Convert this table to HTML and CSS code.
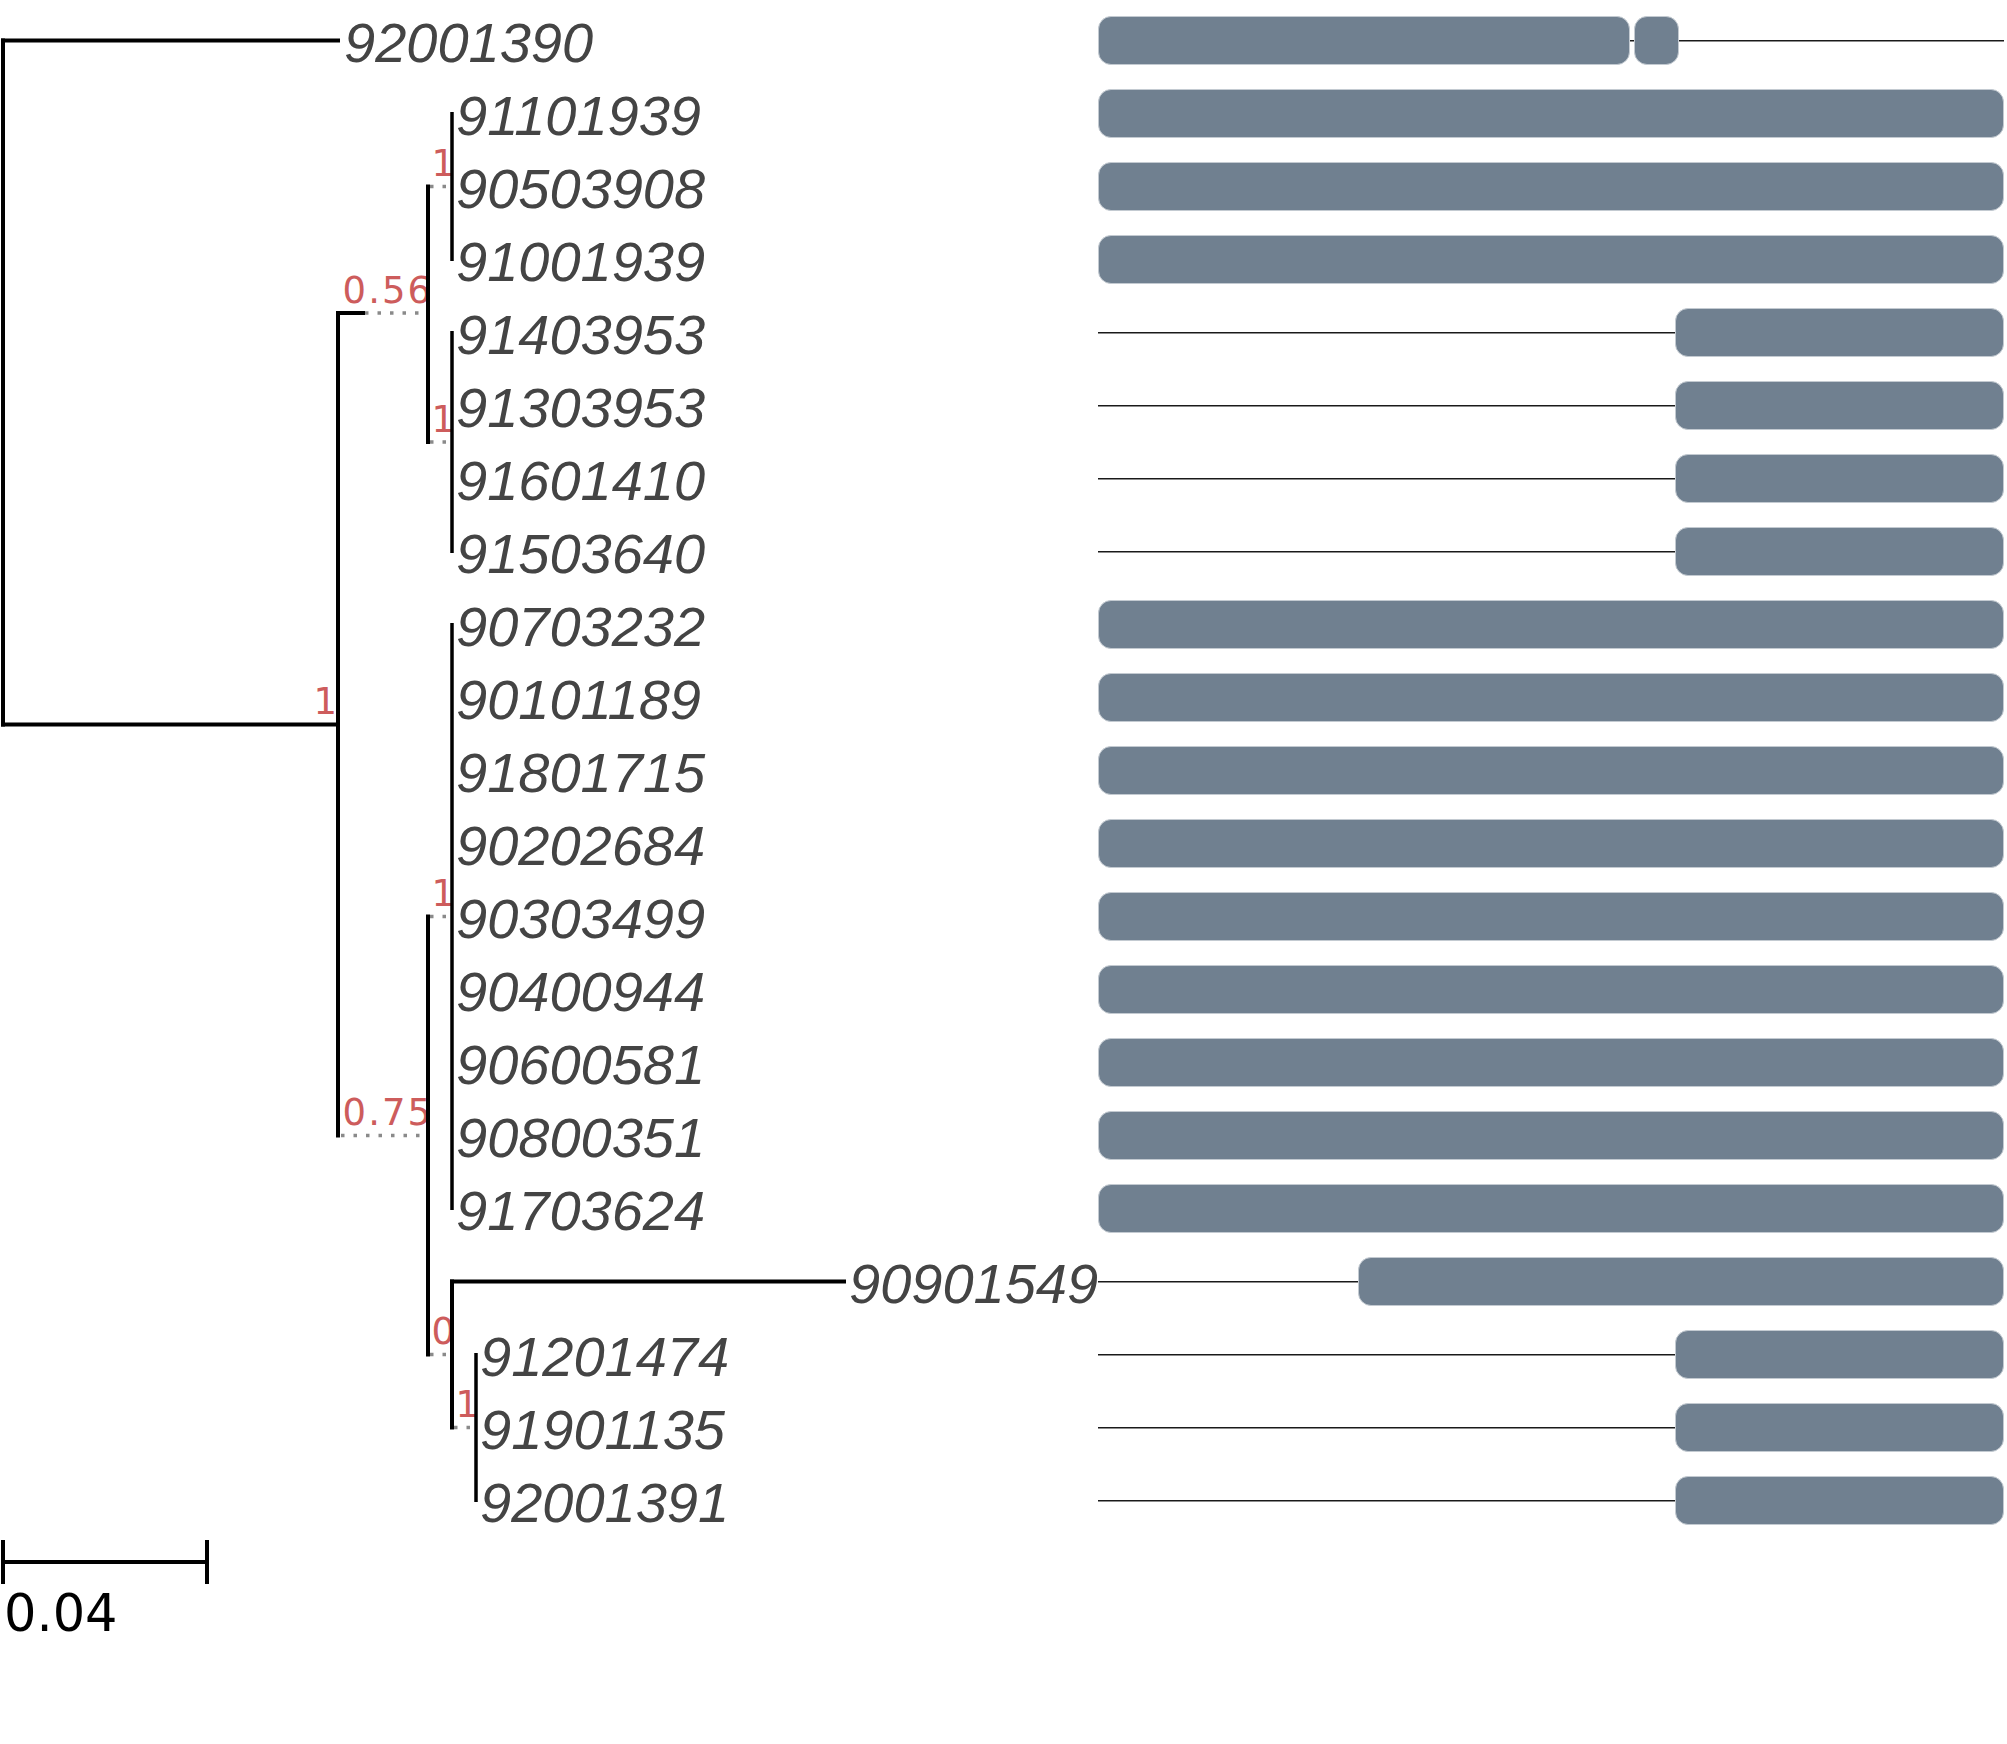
FILE: index.html
```html
<!DOCTYPE html>
<html lang="en">
<head>
<meta charset="utf-8">
<title>Tree</title>
<link rel="stylesheet" href="styles.css">
</head>
<body>
<div class="figure">
  <svg class="tree" width="1098" height="1660" viewBox="0 0 1098 1660" xmlns="http://www.w3.org/2000/svg">
    <!-- root -->
    <line class="br" x1="3" y1="38.5" x2="3" y2="726.5"/>
    <line class="br" x1="1" y1="40.5" x2="340" y2="40.5"/>
    <line class="br" x1="1" y1="724.5" x2="338" y2="724.5"/>
    <text class="sup" x="339" y="714">1</text>
    <!-- node A -->
    <line class="br" x1="338" y1="311" x2="338" y2="1137.5"/>
    <line class="br" x1="336" y1="313" x2="365" y2="313"/>
    <line class="dot" x1="365" y1="313" x2="428" y2="313"/>
    <text class="sup" x="433" y="303">0.56</text>
    <line class="dot" x1="341" y1="1135.5" x2="428" y2="1135.5"/>
    <text class="sup" x="433" y="1125">0.75</text>
    <!-- node B -->
    <line class="br" x1="428" y1="184.5" x2="428" y2="444"/>
    <line class="dot" x1="430" y1="186.5" x2="452" y2="186.5"/>
    <text class="sup" x="457" y="176">1</text>
    <line class="dot" x1="430" y1="442" x2="452" y2="442"/>
    <text class="sup" x="457" y="432">1</text>
    <line class="br thin" x1="452" y1="112" x2="452" y2="261"/>
    <line class="br thin" x1="452" y1="331" x2="452" y2="553"/>
    <!-- node C -->
    <line class="br" x1="428" y1="914.5" x2="428" y2="1356.5"/>
    <line class="dot" x1="430" y1="916.5" x2="452" y2="916.5"/>
    <text class="sup" x="457" y="906">1</text>
    <line class="dot" x1="430" y1="1354.5" x2="452" y2="1354.5"/>
    <text class="sup" x="457" y="1344">0</text>
    <line class="br thin" x1="452" y1="623" x2="452" y2="1210"/>
    <!-- node C2 -->
    <line class="br" x1="452" y1="1279.5" x2="452" y2="1429.5"/>
    <line class="br" x1="450" y1="1281.5" x2="846" y2="1281.5"/>
    <line class="dot" x1="454" y1="1427.5" x2="476" y2="1427.5"/>
    <text class="sup" x="481" y="1417">1</text>
    <line class="br thin" x1="476" y1="1353" x2="476" y2="1502"/>

    <!-- leaves -->
    <text class="leaf" x="344" y="62">92001390</text>
    <text class="leaf" x="456" y="135">91101939</text>
    <text class="leaf" x="456" y="208">90503908</text>
    <text class="leaf" x="456" y="281">91001939</text>
    <text class="leaf" x="456" y="354">91403953</text>
    <text class="leaf" x="456" y="427">91303953</text>
    <text class="leaf" x="456" y="500">91601410</text>
    <text class="leaf" x="456" y="573">91503640</text>
    <text class="leaf" x="456" y="646">90703232</text>
    <text class="leaf" x="456" y="719">90101189</text>
    <text class="leaf" x="456" y="792">91801715</text>
    <text class="leaf" x="456" y="865">90202684</text>
    <text class="leaf" x="456" y="938">90303499</text>
    <text class="leaf" x="456" y="1011">90400944</text>
    <text class="leaf" x="456" y="1084">90600581</text>
    <text class="leaf" x="456" y="1157">90800351</text>
    <text class="leaf" x="456" y="1230">91703624</text>
    <text class="leaf" x="849" y="1303">90901549</text>
    <text class="leaf" x="480" y="1376">91201474</text>
    <text class="leaf" x="480" y="1449">91901135</text>
    <text class="leaf" x="480" y="1522">92001391</text>

    <!-- scale bar -->
    <line class="br" x1="3" y1="1562" x2="207" y2="1562"/>
    <line class="br" x1="3" y1="1540" x2="3" y2="1584"/>
    <line class="br" x1="207" y1="1540" x2="207" y2="1584"/>
    <text class="scale-label" x="4" y="1631">0.04</text>
  </svg>

  <div class="tracks">
    <div class="track"><span class="seg" style="width:532px"></span><span class="seg" style="margin-left:4px;width:45px"></span></div>
    <div class="track"><span class="seg full"></span></div>
    <div class="track"><span class="seg full"></span></div>
    <div class="track"><span class="seg full"></span></div>
    <div class="track"><span class="seg short"></span></div>
    <div class="track"><span class="seg short"></span></div>
    <div class="track"><span class="seg short"></span></div>
    <div class="track"><span class="seg short"></span></div>
    <div class="track"><span class="seg full"></span></div>
    <div class="track"><span class="seg full"></span></div>
    <div class="track"><span class="seg full"></span></div>
    <div class="track"><span class="seg full"></span></div>
    <div class="track"><span class="seg full"></span></div>
    <div class="track"><span class="seg full"></span></div>
    <div class="track"><span class="seg full"></span></div>
    <div class="track"><span class="seg full"></span></div>
    <div class="track"><span class="seg full"></span></div>
    <div class="track"><span class="seg" style="margin-left:260px;width:646px"></span></div>
    <div class="track"><span class="seg short"></span></div>
    <div class="track"><span class="seg short"></span></div>
    <div class="track"><span class="seg short"></span></div>
  </div>
</div>
</body>
</html>
```

FILE: styles.css
```css
html, body {
  margin: 0;
  padding: 0;
  background: #ffffff;
}

body {
  width: 2007px;
  height: 1744px;
  overflow: hidden;
  font-family: "Liberation Sans", Arial, sans-serif;
}

.figure {
  display: flex;
  align-items: flex-start;
}

.tree {
  display: block;
  flex: 0 0 auto;
}

.br {
  stroke: #000000;
  stroke-width: 4;
  fill: none;
}

.br.thin {
  stroke-width: 3.5;
}

.dot {
  stroke: #8a8a8a;
  stroke-width: 3.5;
  stroke-dasharray: 3.5 9;
  fill: none;
}

.leaf {
  font-family: "Liberation Sans", Arial, sans-serif;
  font-style: italic;
  font-size: 56px;
  fill: #444444;
}

.sup {
  font-family: "DejaVu Sans", Verdana, sans-serif;
  font-size: 37px;
  letter-spacing: 2px;
  fill: #cd5c5c;
  text-anchor: end;
}

.scale-label {
  font-family: "DejaVu Sans", sans-serif;
  font-size: 51px;
  fill: #000000;
}

.tracks {
  display: flex;
  flex-direction: column;
  width: 906px;
  padding-top: 4px;
}

.track {
  height: 73px;
  display: flex;
  align-items: center;
  background-image: linear-gradient(#1a1a1a, #1a1a1a);
  background-repeat: no-repeat;
  background-size: 100% 1.5px;
  background-position: 0 35.75px;
}

.seg {
  display: block;
  height: 49px;
  box-sizing: border-box;
  background: #708090;
  border: 1px solid #c3cad1;
  border-radius: 13px;
  flex: 0 0 auto;
}

.seg.full {
  width: 906px;
}

.seg.short {
  margin-left: 577px;
  width: 329px;
}
```
